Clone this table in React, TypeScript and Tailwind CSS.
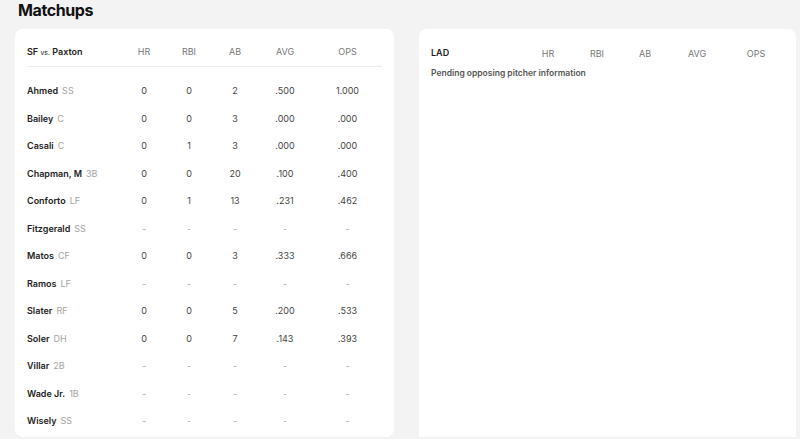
import React from 'react';

interface Batter {
  name: string;
  pos: string;
  stats: string[] | null;
}

const batters: Batter[] = [
  { name: 'Ahmed', pos: 'SS', stats: ['0', '0', '2', '.500', '1.000'] },
  { name: 'Bailey', pos: 'C', stats: ['0', '0', '3', '.000', '.000'] },
  { name: 'Casali', pos: 'C', stats: ['0', '1', '3', '.000', '.000'] },
  { name: 'Chapman, M', pos: '3B', stats: ['0', '0', '20', '.100', '.400'] },
  { name: 'Conforto', pos: 'LF', stats: ['0', '1', '13', '.231', '.462'] },
  { name: 'Fitzgerald', pos: 'SS', stats: null },
  { name: 'Matos', pos: 'CF', stats: ['0', '0', '3', '.333', '.666'] },
  { name: 'Ramos', pos: 'LF', stats: null },
  { name: 'Slater', pos: 'RF', stats: ['0', '0', '5', '.200', '.533'] },
  { name: 'Soler', pos: 'DH', stats: ['0', '0', '7', '.143', '.393'] },
  { name: 'Villar', pos: '2B', stats: null },
  { name: 'Wade Jr.', pos: '1B', stats: null },
  { name: 'Wisely', pos: 'SS', stats: null },
];

const columns = ['HR', 'RBI', 'AB', 'AVG', 'OPS'];

const App: React.FC = () => {
  return (
    <div
      className="min-h-screen bg-[#f3f3f3] pl-[15px] pr-[4px] pt-[1px] text-[#333]"
      style={{ fontFamily: 'Inter, "Liberation Sans", sans-serif' }}
    >
      {/* Title */}
      <h1 className="pl-[3px] text-[16px] font-bold leading-[18px] tracking-tight text-[#111]">Matchups</h1>

      <div className="mt-[10px] grid grid-cols-[379px_377px] gap-[25px]">
        {/* SF batters vs pitcher */}
        <div className="rounded-[8px] bg-white px-3 pt-[16px] pb-[2px]">
          <div className="grid h-[14px] grid-cols-[95px_44px_46px_46px_54px_71px] items-center">
            <span className="-mt-[1px] text-[9px] font-semibold text-[#222]">
              SF <span className="text-[7px] font-normal">vs.</span> Paxton
            </span>
            {columns.map((c) => (
              <span key={c} className="text-center text-[9px] text-[#777]">{c}</span>
            ))}
          </div>
          <div className="mt-[7px] h-px bg-[#ececec]" />
          <div className="mt-[10px]">
            {batters.map((b) => (
              <div key={b.name} className="grid h-[27.5px] grid-cols-[95px_44px_46px_46px_54px_71px] items-center">
                <span className="text-[9px]">
                  <span className="font-semibold text-[#222]">{b.name}</span>
                  <span className="ml-[4px] text-[#a3a3a3]">{b.pos}</span>
                </span>
                {(b.stats ?? ['-', '-', '-', '-', '-']).map((s, i) => (
                  <span
                    key={i}
                    className={`text-center text-[9px] ${b.stats ? 'text-[#444]' : 'text-[#aaa]'}`}
                  >
                    {s}
                  </span>
                ))}
              </div>
            ))}
          </div>
        </div>

        {/* LAD */}
        <div className="rounded-t-[8px] bg-white px-3 pt-[18px]">
          <div className="grid h-[14px] grid-cols-[95px_44px_54px_42px_62px_56px] items-center">
            <span className="-mt-[2px] text-[9px] font-semibold text-[#222]">LAD</span>
            {columns.map((c) => (
              <span key={c} className="text-center text-[9px] text-[#777]">{c}</span>
            ))}
          </div>
          <p className="mt-[6px] text-[8.5px] font-semibold text-[#555]">Pending opposing pitcher information</p>
        </div>
      </div>
    </div>
  );
};

export default App;
